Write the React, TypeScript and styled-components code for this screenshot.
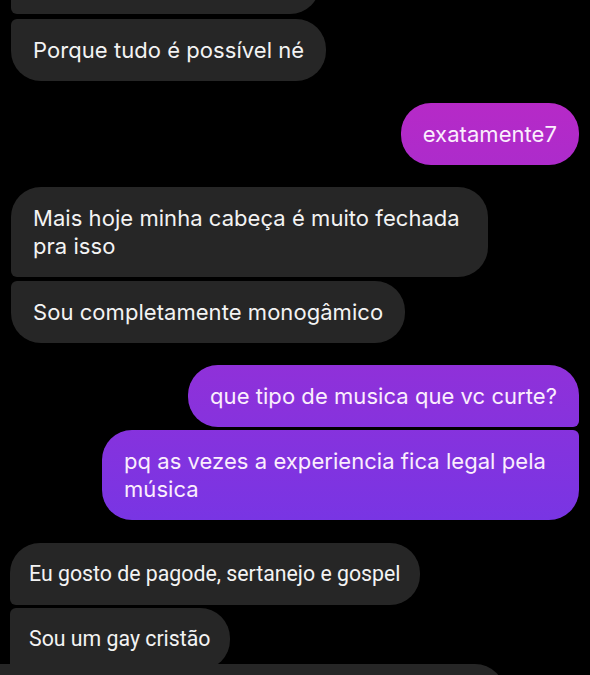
import styled, { createGlobalStyle, css } from "styled-components";

const GlobalStyle = createGlobalStyle`
  html, body {
    margin: 0;
    padding: 0;
    background: #000;
    overflow: hidden;
  }
`;

type Corner = "big" | "small" | "none";

const R = (c: Corner) => (c === "big" ? "30px" : c === "small" ? "6px" : "0");

const Screen = styled.div`
  width: 590px;
  height: 675px;
  overflow: hidden;
  background: #000;
`;

const Thread = styled.div`
  display: flex;
  flex-direction: column;
  padding: 0 11px;
  margin-top: -48px;
`;

const Bubble = styled.div<{
  $mine?: boolean;
  $top: Corner;
  $bottom: Corner;
  $gap: number;
  $alt?: boolean;
}>`
  flex-shrink: 0;
  align-self: ${(p) => (p.$mine ? "flex-end" : "flex-start")};
  margin-top: ${(p) => p.$gap}px;
  padding: 17px 22px;
  box-sizing: border-box;
  font-family: "Inter", "Noto Sans", sans-serif;
  font-size: 22px;
  letter-spacing: 0.05px;
  line-height: 28px;
  max-width: 477px;
  color: #f3f3f3;
  ${(p) =>
    p.$alt &&
    css`
      font-family: "Roboto", "Noto Sans", sans-serif;
      font-size: 21.3px;
      letter-spacing: 0;
      padding: 17px 19px;
      margin-left: -1px;
    `}
  ${(p) =>
    p.$mine
      ? css`
          background: linear-gradient(180deg, #c527c0 0px, #6239ee 675px);
          background-attachment: fixed;
          color: #fbeefd;
          border-radius: ${R("big")} ${R(p.$top)} ${R(p.$bottom)} ${R("big")};
        `
      : css`
          background: #262626;
          border-radius: ${R(p.$top)} ${R("big")} ${R("big")} ${R(p.$bottom)};
        `}
`;

const Placeholder = styled(Bubble)`
  width: 309px;
  height: 62px;
`;

const Footer = styled.div`
  flex-shrink: 0;
  margin: -6px 0 0 -11px;
  width: 505px;
  height: 40px;
  background: #262626;
  border-radius: 0 30px 0 0;
`;

export default function App() {
  return (
    <Screen>
      <GlobalStyle />
      <Thread>
        <Placeholder $top="big" $bottom="small" $gap={0} />
        <Bubble $top="small" $bottom="big" $gap={5}>
          Porque tudo é possível né
        </Bubble>
        <Bubble $mine $top="big" $bottom="big" $gap={22}>
          exatamente7
        </Bubble>
        <Bubble $top="big" $bottom="small" $gap={22}>
          Mais hoje minha cabeça é muito fechada pra isso
        </Bubble>
        <Bubble $top="small" $bottom="big" $gap={4}>
          Sou completamente monogâmico
        </Bubble>
        <Bubble $mine $top="big" $bottom="small" $gap={22}>
          que tipo de musica que vc curte?
        </Bubble>
        <Bubble $mine $top="small" $bottom="big" $gap={3}>
          pq as vezes a experiencia fica legal pela música
        </Bubble>
        <Bubble $alt $top="big" $bottom="small" $gap={23}>
          Eu gosto de pagode, sertanejo e gospel
        </Bubble>
        <Bubble $alt $top="small" $bottom="none" $gap={3}>
          Sou um gay cristão
        </Bubble>
        <Footer />
      </Thread>
    </Screen>
  );
}
